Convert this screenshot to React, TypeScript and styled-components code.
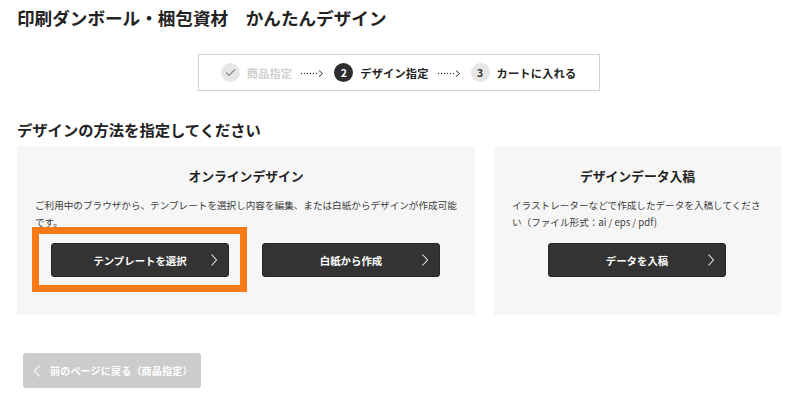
import styled, { createGlobalStyle } from "styled-components";

const GlobalStyle = createGlobalStyle`
  html, body {
    margin: 0;
    padding: 0;
    background: #ffffff;
  }
  body {
    font-family: "Noto Sans CJK JP", "Noto Sans", sans-serif;
    color: #222222;
  }
`;

const Page = styled.div`
  width: 800px;
  height: 400px;
  box-sizing: border-box;
  padding: 4px 19px 0 17px;
  overflow: hidden;
`;

const Title = styled.h1`
  margin: 0;
  font-size: 17.6px;
  line-height: 27px;
  font-weight: 700;
  color: #222;
`;

const StepperWrap = styled.div`
  display: flex;
  justify-content: center;
  margin-top: 23px;
`;

const Stepper = styled.div`
  display: flex;
  align-items: center;
  height: 37px;
  box-sizing: border-box;
  border: 1px solid #d2d2d2;
  padding: 0 23px 0 22px;
`;

const Step = styled.div<{ $state: "done" | "current" | "next" }>`
  display: flex;
  align-items: center;
  gap: 7px;
  font-size: 11.2px;
  letter-spacing: 0.2px;
  font-weight: 700;
  color: ${(p) => (p.$state === "done" ? "#cfcfcf" : "#222")};
`;

const StepNum = styled.span<{ $state: "done" | "current" | "next" }>`
  width: 19px;
  height: 19px;
  border-radius: 50%;
  display: flex;
  align-items: center;
  justify-content: center;
  font-size: 10.4px;
  font-weight: 700;
  letter-spacing: 0;
  background: ${(p) => (p.$state === "current" ? "#2e2e2e" : "#e6e6e6")};
  color: ${(p) => (p.$state === "current" ? "#fff" : "#333")};
`;

const Dots = styled.span`
  display: flex;
  align-items: center;
  margin: 0 10px 0 8px;
  color: #333;
`;

const Heading = styled.h2`
  margin: 27px 0 0;
  font-size: 15.3px;
  line-height: 22px;
  font-weight: 700;
  color: #222;
`;

const Panels = styled.div`
  display: grid;
  grid-template-columns: 458px 287px;
  gap: 19px;
  margin-top: 6px;
`;

const Panel = styled.div`
  background: #f6f6f6;
  height: 169px;
  box-sizing: border-box;
  padding: 20px 18px 0 18px;
`;

const PanelTitle = styled.div`
  text-align: center;
  font-size: 12.8px;
  line-height: 20px;
  font-weight: 700;
  color: #222;
`;

const Desc = styled.p`
  margin: 11px 0 0;
  font-size: 9.6px;
  line-height: 16.5px;
  height: 36px;
  color: #3c3c3c;
`;

const ButtonRow = styled.div`
  display: flex;
  justify-content: center;
  gap: 33px;
  margin-top: 10px;
  padding-right: 1px;
`;

const DarkButton = styled.button`
  position: relative;
  width: 178px;
  height: 34px;
  border: 1px solid #262626;
  border-radius: 3px;
  background: #333333;
  color: #fff;
  font-family: inherit;
  font-size: 10.4px;
  font-weight: 700;
  display: flex;
  align-items: center;
  justify-content: center;
  padding: 0;
  cursor: pointer;

  svg {
    position: absolute;
    right: 10px;
    top: 50%;
    transform: translateY(-50%);
  }
`;

const Highlight = styled.span`
  position: absolute;
  left: -20px;
  top: -17px;
  right: -19px;
  bottom: -16px;
  border: 7px solid #f97a16;
  pointer-events: none;
`;

const BackButton = styled.button`
  position: relative;
  margin: 38px 0 0 6px;
  width: 178px;
  height: 35px;
  border: none;
  border-radius: 3px;
  background: #cccccc;
  color: #fff;
  font-family: inherit;
  font-size: 10px;
  letter-spacing: 0.2px;
  font-weight: 700;
  display: flex;
  align-items: center;
  padding: 0 0 0 27px;

  svg {
    position: absolute;
    left: 10px;
    top: 50%;
    transform: translateY(-50%);
  }
`;

const ChevronRight = () => (
  <svg width="8" height="14" viewBox="0 0 8 14" fill="none">
    <polyline points="1.5,1.5 6.5,7 1.5,12.5" stroke="#e8e8e8" strokeWidth="1.1" />
  </svg>
);

const ChevronLeft = () => (
  <svg width="8" height="14" viewBox="0 0 8 14" fill="none">
    <polyline points="6.5,1.5 1.5,7 6.5,12.5" stroke="#fff" strokeWidth="1.1" />
  </svg>
);

const DotArrow = () => (
  <svg width="24" height="8" viewBox="0 0 24 8" fill="none">
    <g fill="#333">
      <circle cx="1.5" cy="4.5" r="0.7" />
      <circle cx="4.5" cy="4.5" r="0.7" />
      <circle cx="7.5" cy="4.5" r="0.7" />
      <circle cx="10.5" cy="4.5" r="0.7" />
      <circle cx="13.5" cy="4.5" r="0.7" />
      <circle cx="16.5" cy="4.5" r="0.7" />
    </g>
    <polyline points="19,1.5 22.5,4.5 19,7.5" stroke="#333" strokeWidth="1" />
  </svg>
);

const Check = () => (
  <svg width="11" height="9" viewBox="0 0 11 9" fill="none">
    <polyline points="1,4.5 4,7.5 10,1.5" stroke="#888" strokeWidth="1.1" />
  </svg>
);

export default function App() {
  return (
    <>
      <GlobalStyle />
      <Page>
        <Title>印刷ダンボール・梱包資材　かんたんデザイン</Title>

        <StepperWrap>
          <Stepper>
            <Step $state="done">
              <StepNum $state="done">
                <Check />
              </StepNum>
              商品指定
            </Step>
            <Dots>
              <DotArrow />
            </Dots>
            <Step $state="current">
              <StepNum $state="current">2</StepNum>
              デザイン指定
            </Step>
            <Dots>
              <DotArrow />
            </Dots>
            <Step $state="next">
              <StepNum $state="next">3</StepNum>
              カートに入れる
            </Step>
          </Stepper>
        </StepperWrap>

        <Heading>デザインの方法を指定してください</Heading>

        <Panels>
          <Panel>
            <PanelTitle>オンラインデザイン</PanelTitle>
            <Desc>
              ご利用中のブラウザから、テンプレートを選択し内容を編集、または白紙からデザインが作成可能です。
            </Desc>
            <ButtonRow>
              <DarkButton>
                テンプレートを選択
                <ChevronRight />
                <Highlight />
              </DarkButton>
              <DarkButton>
                白紙から作成
                <ChevronRight />
              </DarkButton>
            </ButtonRow>
          </Panel>
          <Panel>
            <PanelTitle>デザインデータ入稿</PanelTitle>
            <Desc>
              イラストレーターなどで作成したデータを入稿してください（ファイル形式：ai / eps / pdf)
            </Desc>
            <ButtonRow>
              <DarkButton>
                データを入稿
                <ChevronRight />
              </DarkButton>
            </ButtonRow>
          </Panel>
        </Panels>

        <BackButton>
          <ChevronLeft />
          前のページに戻る（商品指定）
        </BackButton>
      </Page>
    </>
  );
}
